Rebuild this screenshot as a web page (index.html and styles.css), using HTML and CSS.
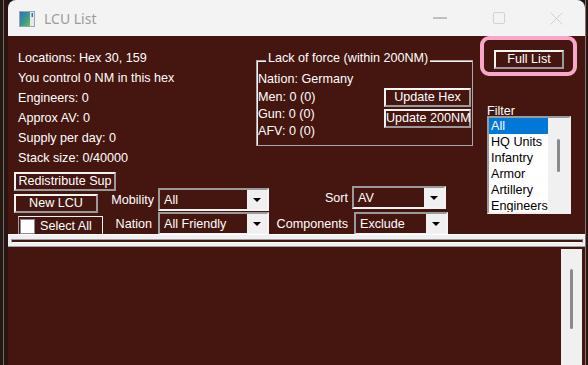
FILE: index.html
```html
<!DOCTYPE html>
<html lang="en">
<head>
  <meta charset="UTF-8">
  <title>LCU List</title>
  <link rel="stylesheet" href="styles.css">
</head>
<body>
  <div class="desktop">
    <div class="edge-left"></div>
    <div class="window">
      <div class="titlebar">
        <svg class="app-icon" width="16" height="16" viewBox="0 0 16 16">
          <defs>
            <linearGradient id="ig" x1="0" y1="0" x2="1" y2="1">
              <stop offset="0" stop-color="#2f6fbf"/>
              <stop offset="0.55" stop-color="#3b9a8c"/>
              <stop offset="1" stop-color="#6cc04a"/>
            </linearGradient>
          </defs>
          <rect x="0.5" y="0.5" width="15" height="15" fill="#e8e8e8" stroke="#9aa4ad"/>
          <rect x="1" y="1" width="10" height="14" fill="url(#ig)"/>
          <rect x="12.5" y="2" width="1.5" height="4" fill="#2c6fc0"/>
        </svg>
        <span class="title">LCU List</span>
        <div class="caption">
          <div class="cap-btn">
            <svg width="14" height="2" viewBox="0 0 14 2"><line x1="0" y1="1" x2="14" y2="1" stroke="#8a8a8a" stroke-width="1"/></svg>
          </div>
          <div class="cap-btn">
            <svg width="12" height="12" viewBox="0 0 12 12"><rect x="0.5" y="0.5" width="11" height="11" rx="1.5" fill="none" stroke="#d2d2d2"/></svg>
          </div>
          <div class="cap-btn close">
            <svg width="13" height="13" viewBox="0 0 13 13"><path d="M0.5 0.5 L12.5 12.5 M12.5 0.5 L0.5 12.5" stroke="#cfcfcf" stroke-width="1"/></svg>
          </div>
        </div>
      </div>

      <div class="client">
        <div class="top">
          <div class="main">
            <div class="upper">
              <div class="info">
                <p>Locations: Hex 30, 159</p>
                <p>You control 0 NM in this hex</p>
                <p>Engineers: 0</p>
                <p>Approx AV: 0</p>
                <p>Supply per day: 0</p>
                <p>Stack size: 0/40000</p>
              </div>
              <div class="group">
                <div class="legend">Lack of force (within 200NM)</div>
                <p class="nation">Nation: Germany</p>
                <div class="group-rows">
                  <div class="counts">
                    <p>Men: 0 (0)</p>
                    <p>Gun: 0 (0)</p>
                    <p>AFV: 0 (0)</p>
                  </div>
                  <div class="update-btns">
                    <button class="btn update">Update Hex</button>
                    <button class="btn update">Update 200NM</button>
                  </div>
                </div>
              </div>
            </div>

            <div class="controls">
              <div class="col-buttons">
                <button class="btn redistribute">Redistribute Sup</button>
                <button class="btn new-lcu">New LCU</button>
                <div class="btn select-all"><span class="check"></span>Select All</div>
              </div>
              <div class="col-combos">
                <span class="label">Mobility</span>
                <div class="combo wide"><span class="value">All</span><span class="drop"><i></i></span></div>
                <span class="label nudge">Nation</span>
                <div class="combo wide"><span class="value">All Friendly</span><span class="drop"><i></i></span></div>
              </div>
              <div class="col-sort">
                <span class="label">Sort</span>
                <div class="combo"><span class="value">AV</span><span class="drop"><i></i></span></div>
                <span class="label">Components</span>
                <div class="combo shifted"><span class="value">Exclude</span><span class="drop"><i></i></span></div>
              </div>
            </div>
          </div>

          <div class="side">
            <div class="highlight">
              <button class="btn full">Full List</button>
            </div>
            <div class="filter">
              <div class="filter-label">Filter</div>
              <div class="listbox">
                <ul class="items">
                  <li class="selected">All</li>
                  <li>HQ Units</li>
                  <li>Infantry</li>
                  <li>Armor</li>
                  <li>Artillery</li>
                  <li>Engineers</li>
                </ul>
                <div class="lb-scroll"><div class="lb-thumb"></div></div>
              </div>
            </div>
          </div>
        </div>

        <div class="splitter"><div class="groove"></div></div>

        <div class="list">
          <div class="list-body"></div>
          <div class="vscroll"><div class="thumb"></div></div>
        </div>
      </div>
    </div>
    <div class="edge-right"></div>
  </div>
</body>
</html>
```

FILE: styles.css
```css
body {
  margin: 0;
  background-color: #1d1411;
  font-family: "Liberation Sans", Arial, sans-serif;
  font-size: 12.6px;
  overflow: hidden;
}

p {
  margin: 0;
}

.desktop {
  display: flex;
  width: 588px;
  height: 365px;
}

.edge-left {
  width: 8px;
  box-sizing: border-box;
  border-left: 3px solid #24180f;
  background-color: #2a1512;
  box-shadow: inset 1px 0 0 #6e6e6e;
}

.edge-right {
  width: 3px;
  background-color: #2a1512;
  box-shadow: inset 1px 0 0 #7a7a7a;
}

.window {
  width: 577px;
  display: flex;
  flex-direction: column;
  border-radius: 8px 8px 0 0;
  overflow: hidden;
}

/* title bar */

.titlebar {
  height: 36px;
  flex-shrink: 0;
  display: flex;
  align-items: center;
  background-color: #f3f3f3;
}

.app-icon {
  margin-left: 11px;
  margin-top: 1px;
}

.title {
  margin-left: 9px;
  font-family: "Noto Sans", "Open Sans", sans-serif;
  font-size: 14px;
  color: #9b9b9b;
}

.caption {
  margin-left: auto;
  display: flex;
  height: 100%;
}

.cap-btn {
  width: 59px;
  display: flex;
  align-items: center;
  justify-content: center;
}

.cap-btn.close {
  width: 57px;
}

/* client area */

.client {
  flex: 1;
  display: flex;
  flex-direction: column;
  background-color: #45150f;
  color: #fff;
}

.top {
  height: 198px;
  display: flex;
  overflow: hidden;
}

.main {
  width: 472px;
  padding-left: 6px;
  box-sizing: border-box;
}

.upper {
  display: flex;
  align-items: flex-start;
}

.info {
  width: 242px;
  padding: 12px 0 0 4px;
  box-sizing: border-box;
}

.info p {
  line-height: 20px;
  white-space: nowrap;
}

.group {
  width: 217px;
  margin-top: 24px;
  padding: 0 1px 5px 1px;
  box-sizing: border-box;
  border: 1px solid #a8a8a8;
  box-shadow: inset 1px 1px 0 #f4f4f4;
}

.legend {
  width: fit-content;
  margin: -10px 0 0 8px;
  padding: 0 2px;
  line-height: 14px;
  background-color: #45150f;
  white-space: nowrap;
}

.nation {
  margin-top: 4px;
  line-height: 20px;
}

.group-rows {
  display: flex;
  justify-content: space-between;
}

.counts p {
  line-height: 17px;
}

.update-btns {
  display: flex;
  flex-direction: column;
  gap: 2px;
  margin-top: -1px;
}

/* buttons */

.btn {
  box-sizing: border-box;
  height: 19px;
  padding: 0;
  border: 2px solid;
  border-color: #f4f4f4 #9a9a9a #9a9a9a #f4f4f4;
  background-color: #45150f;
  color: #fff;
  font-family: "Liberation Sans", Arial, sans-serif;
  font-size: 12.6px;
  line-height: 15px;
  text-align: center;
  white-space: nowrap;
}

.update {
  width: 87px;
}

.full {
  width: 70px;
}

.controls {
  display: flex;
  align-items: flex-start;
  margin-top: 4px;
}

.col-buttons {
  width: 102px;
  display: flex;
  flex-direction: column;
  align-items: flex-start;
  gap: 3px;
}

.redistribute {
  width: 102px;
}

.new-lcu {
  width: 84px;
}

.select-all {
  width: 85px;
  height: 19px;
  margin-left: 4px;
  display: flex;
  align-items: center;
  gap: 5px;
  padding-left: 0;
  border-width: 1px 1px 0 1px;
  border-color: #f4f4f4 #f4f4f4 transparent #a0a0a0;
  text-align: left;
}

.check {
  width: 15px;
  height: 15px;
  margin-left: 1px;
  box-sizing: border-box;
  background-color: #fff;
  border: 1px solid #8a8a8a;
}

.col-combos,
.col-sort {
  display: grid;
  align-items: center;
}

.col-combos {
  margin-left: -4px;
  padding-top: 16px;
  grid-template-columns: 42px 111px;
  column-gap: 4px;
  row-gap: 1px;
}

.col-sort {
  margin-left: 8px;
  padding-top: 14px;
  grid-template-columns: 71px 96px;
  column-gap: 4px;
  row-gap: 3px;
}

.label {
  justify-self: end;
  line-height: 14px;
  white-space: nowrap;
}

.label.nudge {
  margin-right: 2px;
}

.combo {
  width: 94px;
  height: 23px;
  box-sizing: border-box;
  display: flex;
  align-items: center;
  border: 2px solid;
  border-color: #9a9a9a #f4f4f4 #f4f4f4 #9a9a9a;
}

.combo.wide {
  width: 111px;
}

.combo.shifted {
  margin-left: 2px;
}

.value {
  flex: 1;
  padding-left: 4px;
  white-space: nowrap;
}

.drop {
  width: 20px;
  height: 100%;
  display: flex;
  align-items: center;
  justify-content: center;
  background-color: #f0f0f0;
}

.drop i {
  width: 0;
  height: 0;
  border-left: 4px solid transparent;
  border-right: 4px solid transparent;
  border-top: 4px solid #000;
}

/* right side */

.side {
  width: 105px;
}

.highlight {
  width: 97px;
  height: 40px;
  box-sizing: border-box;
  padding: 10px 0 0 10px;
  border: 4px solid #f7a8c9;
  border-radius: 9px;
}

.filter {
  margin: 29px 0 0 7px;
}

.filter-label {
  line-height: 12px;
}

.listbox {
  width: 84px;
  height: 98px;
  margin-top: -1px;
  box-sizing: border-box;
  display: flex;
  border: 2px solid;
  border-color: #9a9a9a #f0f0f0 #f0f0f0 #9a9a9a;
  background-color: #fff;
  overflow: hidden;
}

.items {
  width: 59px;
  margin: 0;
  padding: 0;
  list-style: none;
  color: #000;
}

.items li {
  height: 16px;
  line-height: 16px;
  padding-left: 2px;
  white-space: nowrap;
}

.items .selected {
  background-color: #0078d7;
  color: #fff;
}

.lb-scroll {
  flex: 1;
  background-color: #f0f0f0;
}

.lb-thumb {
  width: 3px;
  height: 33px;
  margin: 21px 0 0 9px;
  border-radius: 2px;
  background-color: #8a8a8a;
}

/* splitter and list */

.splitter {
  height: 13px;
  padding: 4px 2px 0 3px;
  box-sizing: border-box;
  background-color: #f0f0f0;
  border-top: 1px solid #fff;
  border-bottom: 1px solid #a0a0a0;
}

.groove {
  height: 2px;
  border: 1px solid #a0a0a0;
  border-bottom-color: #fff;
  border-right-color: #6a6a6a;
  background-color: #45150f;
}

.list {
  flex: 1;
  display: flex;
}

.list-body {
  flex: 1;
}

.vscroll {
  width: 21px;
  margin: 2px 3px 0 0;
  background-color: #f0f0f0;
}

.thumb {
  width: 3px;
  height: 60px;
  margin: 20px 0 0 9px;
  border-radius: 2px;
  background-color: #8a8a8a;
}
```
